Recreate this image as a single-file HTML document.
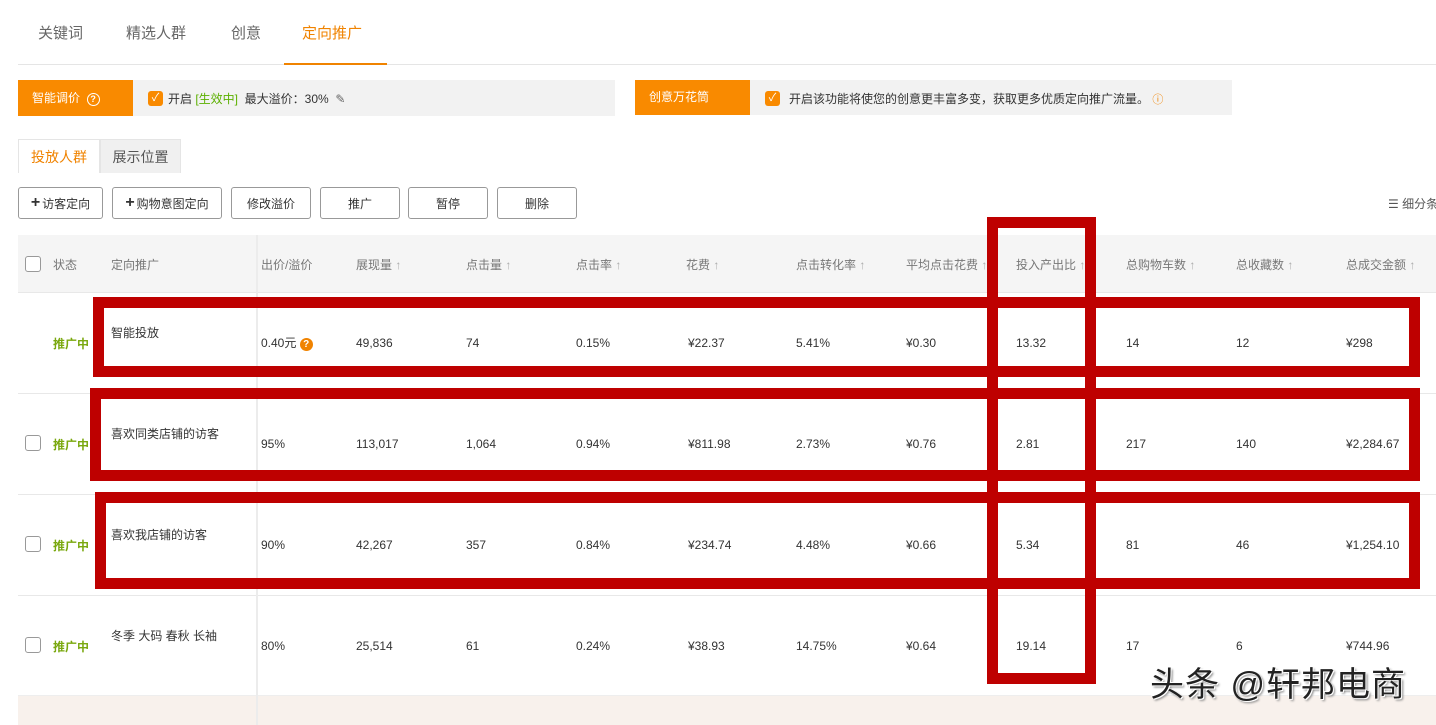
<!DOCTYPE html>
<html><head><meta charset="utf-8"><style>
*{margin:0;padding:0;box-sizing:border-box}
body{width:1436px;height:725px;overflow:hidden;background:#fff;font-family:"Liberation Sans","Noto Sans CJK SC",sans-serif;font-size:12px;color:#333;position:relative}
.a{position:absolute;white-space:nowrap}
.tab{font-size:15px;color:#666;top:22px}
.btn{position:absolute;top:187px;height:32px;border:1px solid #999;border-radius:3px;background:#fff;font-size:12px;color:#333;display:flex;align-items:center;justify-content:center}
.cb{position:absolute;width:16px;height:16px;border:1px solid #999;border-radius:3px;background:#fff}
.h{color:#777}
.row{position:absolute;left:18px;width:1418px;height:101px;border-top:1px solid #e8e8e8}
.st{color:#7aa80f;font-weight:bold}
.rb{position:absolute;border:11px solid #be0000}
.ar{color:#aaa}
.y{font-family:"Liberation Sans",sans-serif}
</style></head><body>
<div class="a tab" style="left:38px">关键词</div>
<div class="a tab" style="left:126px">精选人群</div>
<div class="a tab" style="left:231px">创意</div>
<div class="a tab" style="left:302px;color:#f08300">定向推广</div>
<div class="a" style="left:18px;top:64px;width:1418px;height:1px;background:#e5e5e5"></div>
<div class="a" style="left:284px;top:63px;width:103px;height:2px;background:#f08300"></div>

<div class="a" style="left:18px;top:80px;width:115px;height:36px;background:#f98a00;color:#fff;line-height:36px;padding-left:14px">智能调价 &nbsp;<span style="display:inline-block;width:13px;height:13px;border:1.5px solid #fff;border-radius:50%;font-size:9px;line-height:10px;text-align:center;font-weight:bold">?</span></div>
<div class="a" style="left:133px;top:80px;width:482px;height:36px;background:#f2f2f2"></div>
<div class="a" style="left:148px;top:91px;width:15px;height:15px;background:#f98a00;border-radius:3px;color:#fff;font-size:11px;line-height:15px;text-align:center">✓</div>
<div class="a" style="left:168px;top:90px;color:#333">开启 <span style="color:#5cb000">[生效中]</span>&nbsp; 最大溢价：30% &nbsp;<span style="color:#666">✎</span></div>

<div class="a" style="left:635px;top:80px;width:115px;height:35px;background:#f98a00;color:#fff;line-height:35px;padding-left:14px">创意万花筒</div>
<div class="a" style="left:750px;top:80px;width:482px;height:35px;background:#f2f2f2"></div>
<div class="a" style="left:765px;top:91px;width:15px;height:15px;background:#f98a00;border-radius:3px;color:#fff;font-size:11px;line-height:15px;text-align:center">✓</div>
<div class="a" style="left:789px;top:90px;color:#333">开启该功能将使您的创意更丰富多变，获取更多优质定向推广流量。 <span style="color:#f08300;font-size:11px">ⓘ</span></div>

<div class="a" style="left:18px;top:139px;width:82px;height:34px;border:1px solid #e5e5e5;border-bottom:none;background:#fff;color:#f08300;font-size:14px;line-height:34px;text-align:center">投放人群</div>
<div class="a" style="left:100px;top:139px;width:81px;height:34px;background:#f0f0f0;border:1px solid #e5e5e5;border-bottom:none;color:#555;font-size:14px;line-height:34px;text-align:center">展示位置</div>

<div class="btn" style="left:18px;width:85px"><b style="font-size:16px;margin-right:2px">+</b>访客定向</div>
<div class="btn" style="left:112px;width:110px"><b style="font-size:16px;margin-right:2px">+</b>购物意图定向</div>
<div class="btn" style="left:231px;width:80px">修改溢价</div>
<div class="btn" style="left:320px;width:80px">推广</div>
<div class="btn" style="left:408px;width:80px">暂停</div>
<div class="btn" style="left:497px;width:80px">删除</div>
<div class="a" style="left:1388px;top:195px;color:#555">☰ 细分条</div>

<div class="a" style="left:18px;top:235px;width:1418px;height:57px;background:#f5f5f5"></div>
<div class="cb" style="left:25px;top:256px"></div>
<div class="a h" style="left:53px;top:256px">状态</div>
<div class="a h" style="left:111px;top:256px">定向推广</div>
<div class="a h" style="left:261px;top:256px">出价/溢价</div>
<div class="a h" style="left:356px;top:256px">展现量 <span class="ar">↑</span></div>
<div class="a h" style="left:466px;top:256px">点击量 <span class="ar">↑</span></div>
<div class="a h" style="left:576px;top:256px">点击率 <span class="ar">↑</span></div>
<div class="a h" style="left:686px;top:256px">花费 <span class="ar">↑</span></div>
<div class="a h" style="left:796px;top:256px">点击转化率 <span class="ar">↑</span></div>
<div class="a h" style="left:906px;top:256px">平均点击花费 <span class="ar">↑</span></div>
<div class="a h" style="left:1016px;top:256px">投入产出比 <span class="ar">↑</span></div>
<div class="a h" style="left:1126px;top:256px">总购物车数 <span class="ar">↑</span></div>
<div class="a h" style="left:1236px;top:256px">总收藏数 <span class="ar">↑</span></div>
<div class="a h" style="left:1346px;top:256px">总成交金额 <span class="ar">↑</span></div>

<div class="row" style="top:292px"></div>
<div class="row" style="top:393px"></div>
<div class="row" style="top:494px"></div>
<div class="row" style="top:595px"></div>
<div class="a" style="left:18px;top:695px;width:1418px;height:30px;background:#f8f1ec;border-top:1px solid #eee"></div>
<div class="a" style="left:256px;top:235px;width:2px;height:490px;background:#ececec"></div>

<!-- row1 -->
<div class="a st" style="left:53px;top:335px">推广中</div>
<div class="a" style="left:111px;top:324px">智能投放</div>
<div class="a" style="left:261px;top:334px">0.40元 <span style="display:inline-block;width:13px;height:13px;background:#f08300;border-radius:50%;color:#fff;font-size:10px;line-height:13px;text-align:center;font-weight:bold">?</span></div>
<div class="a" style="left:356px;top:336px">49,836</div><div class="a" style="left:466px;top:336px">74</div><div class="a" style="left:576px;top:336px">0.15%</div><div class="a y" style="left:688px;top:336px">¥22.37</div><div class="a" style="left:796px;top:336px">5.41%</div><div class="a y" style="left:906px;top:336px">¥0.30</div><div class="a" style="left:1016px;top:336px">13.32</div><div class="a" style="left:1126px;top:336px">14</div><div class="a" style="left:1236px;top:336px">12</div><div class="a y" style="left:1346px;top:336px">¥298</div>
<!-- row2 -->
<div class="cb" style="left:25px;top:435px"></div>
<div class="a st" style="left:53px;top:436px">推广中</div>
<div class="a" style="left:111px;top:425px">喜欢同类店铺的访客</div>
<div class="a" style="left:261px;top:437px">95%</div><div class="a" style="left:356px;top:437px">113,017</div><div class="a" style="left:466px;top:437px">1,064</div><div class="a" style="left:576px;top:437px">0.94%</div><div class="a y" style="left:688px;top:437px">¥811.98</div><div class="a" style="left:796px;top:437px">2.73%</div><div class="a y" style="left:906px;top:437px">¥0.76</div><div class="a" style="left:1016px;top:437px">2.81</div><div class="a" style="left:1126px;top:437px">217</div><div class="a" style="left:1236px;top:437px">140</div><div class="a y" style="left:1346px;top:437px">¥2,284.67</div>
<!-- row3 -->
<div class="cb" style="left:25px;top:536px"></div>
<div class="a st" style="left:53px;top:537px">推广中</div>
<div class="a" style="left:111px;top:526px">喜欢我店铺的访客</div>
<div class="a" style="left:261px;top:538px">90%</div><div class="a" style="left:356px;top:538px">42,267</div><div class="a" style="left:466px;top:538px">357</div><div class="a" style="left:576px;top:538px">0.84%</div><div class="a y" style="left:688px;top:538px">¥234.74</div><div class="a" style="left:796px;top:538px">4.48%</div><div class="a y" style="left:906px;top:538px">¥0.66</div><div class="a" style="left:1016px;top:538px">5.34</div><div class="a" style="left:1126px;top:538px">81</div><div class="a" style="left:1236px;top:538px">46</div><div class="a y" style="left:1346px;top:538px">¥1,254.10</div>
<!-- row4 -->
<div class="cb" style="left:25px;top:637px"></div>
<div class="a st" style="left:53px;top:638px">推广中</div>
<div class="a" style="left:111px;top:627px">冬季 大码 春秋 长袖</div>
<div class="a" style="left:261px;top:639px">80%</div><div class="a" style="left:356px;top:639px">25,514</div><div class="a" style="left:466px;top:639px">61</div><div class="a" style="left:576px;top:639px">0.24%</div><div class="a y" style="left:688px;top:639px">¥38.93</div><div class="a" style="left:796px;top:639px">14.75%</div><div class="a y" style="left:906px;top:639px">¥0.64</div><div class="a" style="left:1016px;top:639px">19.14</div><div class="a" style="left:1126px;top:639px">17</div><div class="a" style="left:1236px;top:639px">6</div><div class="a y" style="left:1346px;top:639px">¥744.96</div>

<!-- red boxes -->
<div class="rb" style="left:93px;top:297px;width:1327px;height:80px"></div>
<div class="rb" style="left:90px;top:388px;width:1330px;height:93px"></div>
<div class="rb" style="left:95px;top:492px;width:1325px;height:97px"></div>
<div class="rb" style="left:987px;top:217px;width:109px;height:467px"></div>

<div class="a" style="left:1150px;top:663px;font-size:34px;line-height:44px;color:#222;letter-spacing:1px;text-shadow:1px 1px 0 #fff,-1px -1px 0 #fff,2px 2px 2px #888">头条 @轩邦电商</div>
</body></html>
